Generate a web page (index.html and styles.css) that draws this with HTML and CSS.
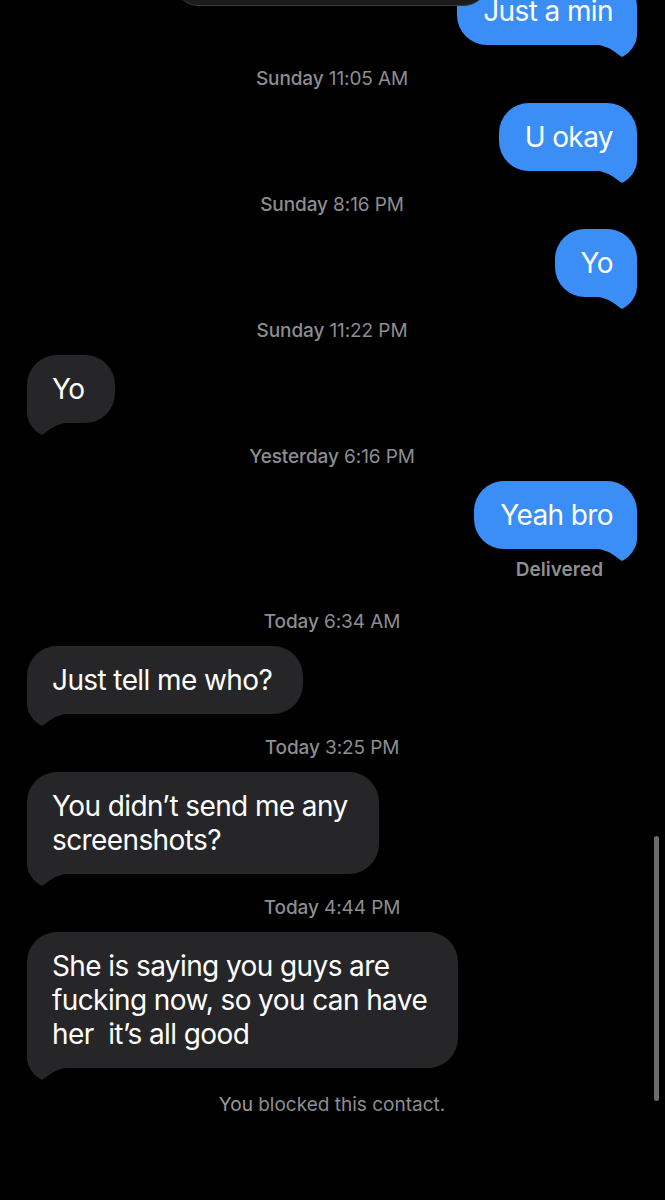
FILE: index.html
```html
<!DOCTYPE html>
<html lang="en">
<head>
    <meta charset="UTF-8">
    <meta name="viewport" content="width=device-width, initial-scale=1.0">
    <title>Messages</title>
    <link rel="stylesheet" href="styles.css">
</head>
<body>
    <div class="screen">
        <div class="top-pill"></div>

        <div class="thread">
            <div class="msg sent first">
                <div class="bubble">Just a min
                    <svg class="tail" viewBox="0 -30 40 43"><path d="M0,-30 L0,-10 C0,-1 7,8 15,12 C21,8 27,2 38,0 L38,-30 Z"/></svg>
                </div>
            </div>
            <div class="stamp"><span class="day">Sunday</span> 11:05 AM</div>

            <div class="msg sent">
                <div class="bubble">U okay
                    <svg class="tail" viewBox="0 -30 40 43"><path d="M0,-30 L0,-10 C0,-1 7,8 15,12 C21,8 27,2 38,0 L38,-30 Z"/></svg>
                </div>
            </div>
            <div class="stamp"><span class="day">Sunday</span> 8:16 PM</div>

            <div class="msg sent">
                <div class="bubble">Yo
                    <svg class="tail" viewBox="0 -30 40 43"><path d="M0,-30 L0,-10 C0,-1 7,8 15,12 C21,8 27,2 38,0 L38,-30 Z"/></svg>
                </div>
            </div>
            <div class="stamp"><span class="day">Sunday</span> 11:22 PM</div>

            <div class="msg received">
                <div class="bubble">Yo
                    <svg class="tail" viewBox="0 -30 40 43"><path d="M0,-30 L0,-10 C0,-1 7,8 15,12 C21,8 27,2 38,0 L38,-30 Z"/></svg>
                </div>
            </div>
            <div class="stamp"><span class="day">Yesterday</span> 6:16 PM</div>

            <div class="msg sent">
                <div class="bubble">Yeah bro
                    <svg class="tail" viewBox="0 -30 40 43"><path d="M0,-30 L0,-10 C0,-1 7,8 15,12 C21,8 27,2 38,0 L38,-30 Z"/></svg>
                </div>
            </div>
            <div class="status">Delivered</div>

            <div class="stamp"><span class="day">Today</span> 6:34 AM</div>
            <div class="msg received">
                <div class="bubble">Just tell me who?
                    <svg class="tail" viewBox="0 -30 40 43"><path d="M0,-30 L0,-10 C0,-1 7,8 15,12 C21,8 27,2 38,0 L38,-30 Z"/></svg>
                </div>
            </div>

            <div class="stamp"><span class="day">Today</span> 3:25 PM</div>
            <div class="msg received">
                <div class="bubble">You didn’t send me any<br>screenshots?
                    <svg class="tail" viewBox="0 -30 40 43"><path d="M0,-30 L0,-10 C0,-1 7,8 15,12 C21,8 27,2 38,0 L38,-30 Z"/></svg>
                </div>
            </div>

            <div class="stamp"><span class="day">Today</span> 4:44 PM</div>
            <div class="msg received">
                <div class="bubble">She is saying you guys are<br>fucking now, so you can have<br>her&nbsp; it’s all good
                    <svg class="tail" viewBox="0 -30 40 43"><path d="M0,-30 L0,-10 C0,-1 7,8 15,12 C21,8 27,2 38,0 L38,-30 Z"/></svg>
                </div>
            </div>

            <div class="note"><span class="you">You</span> blocked this contact.</div>
        </div>

        <div class="scrollbar"></div>
    </div>
</body>
</html>
```

FILE: styles.css
```css
body {
    margin: 0;
    background: #000;
    font-family: Inter, "Noto Sans", sans-serif;
    color: #fff;
}
.screen {
    position: relative;
    width: 665px;
    height: 1200px;
    overflow: hidden;
}
.thread {
    display: flex;
    flex-direction: column;
    padding: 0 28px 0 27px;
}
.msg {
    display: flex;
}
.msg.sent {
    justify-content: flex-end;
}
.msg.first {
    margin-top: -23px;
}
.bubble {
    position: relative;
    isolation: isolate; /* keeps the tail under the text */
    font-size: 28px;
    line-height: 34px;
    letter-spacing: -0.6px;
    padding: 17px 31px 17px 25px;
    border-radius: 30px;
    background: #262628;
    color: #fff;
}
.sent .bubble {
    background: #3a8ef5;
    padding: 17px 24px 17px 26px;
}
.tail {
    position: absolute;
    z-index: -1;
    left: 0;
    bottom: -13px;
    width: 40px;
    height: 43px;
    fill: #262628;
}
.sent .tail {
    left: auto;
    right: 0;
    transform: scaleX(-1);
    fill: #3a8ef5;
}
.stamp {
    margin: 23px 0 13px;
    line-height: 22px;
    font-size: 19px;
    letter-spacing: -0.1px;
    text-align: center;
    color: #8d8d92;
}
.stamp .day {
    font-weight: 500;
}
.status {
    margin: 10px 34px 7px 0;
    line-height: 22px;
    font-size: 19px;
    font-weight: 600;
    text-align: right;
    color: #8d8d92;
}
.note {
    margin-top: 26px;
    line-height: 22px;
    font-size: 19px;
    text-align: center;
    color: #8d8d92;
}
.note .you {
    color: #9a9a9f;
}
.top-pill {
    position: absolute;
    left: 175px;
    top: -40px;
    width: 312px;
    height: 45px;
    border-radius: 24px;
    background: #1c1c1e;
    border-bottom: 1px solid #3a3a3c;
    z-index: 2;
}
.scrollbar {
    position: absolute;
    right: 6px;
    top: 836px;
    width: 5px;
    height: 265px;
    border-radius: 3px;
    background: #6c6c6e;
}
```
